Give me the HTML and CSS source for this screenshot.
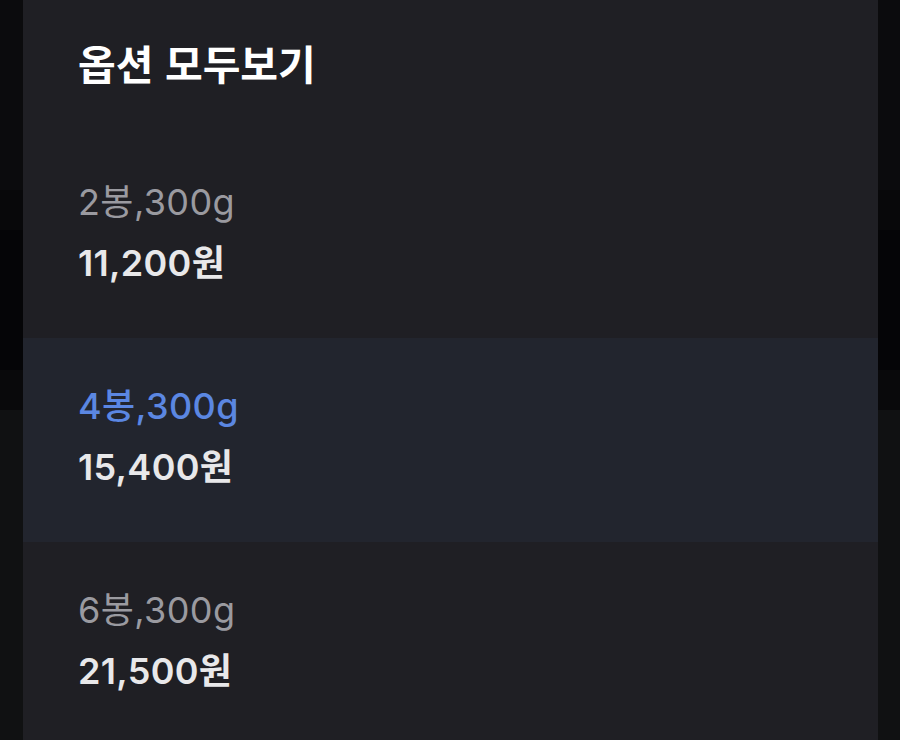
FILE: index.html
```html
<!DOCTYPE html>
<html lang="ko">
<head>
<meta charset="utf-8">
<title>옵션 모두보기</title>
<link rel="stylesheet" href="styles.css">
</head>
<body>
<div class="sheet">
  <h1 class="sheet-title">옵션 모두보기</h1>
  <ul class="options">
    <li class="option">
      <div class="option-name">2봉,300g</div>
      <div class="option-price">11,200원</div>
    </li>
    <li class="option is-selected">
      <div class="option-name">4봉,300g</div>
      <div class="option-price">15,400원</div>
    </li>
    <li class="option">
      <div class="option-name">6봉,300g</div>
      <div class="option-price">21,500원</div>
    </li>
  </ul>
</div>
</body>
</html>
```

FILE: styles.css
```css
html, body {
  margin: 0;
  padding: 0;
}

body {
  width: 900px;
  height: 740px;
  overflow: hidden;
  font-family: "Inter", "Noto Sans CJK KR", sans-serif;
  background: linear-gradient(to bottom,
    #0b0b0d 0, #0b0b0d 190px,
    #08080a 190px, #08080a 230px,
    #050507 230px, #050507 370px,
    #09090b 370px, #09090b 410px,
    #101112 410px, #101112 740px);
}

.sheet {
  margin: 0 22px 0 23px;
  height: 740px;
  background: #1f1f24;
  overflow: hidden;
}

.sheet-title {
  margin: 0;
  padding: 37px 55px 0;
  height: 97px;
  box-sizing: border-box;
  font-family: "Noto Sans CJK KR", sans-serif;
  font-size: 41px;
  line-height: 50px;
  font-weight: 700;
  color: #ffffff;
}

.options {
  list-style: none;
  margin: 0;
  padding: 0;
}

.sheet-title + .options {
  margin-top: 37px;
}

.option {
  height: 204px;
  box-sizing: border-box;
  padding: 45px 55px 0;
}

.option.is-selected {
  background: #22252e;
}

.option-name {
  font-size: 36px;
  line-height: 46px;
  color: #9a9aa0;
  font-weight: 400;
  letter-spacing: 0.4px;
}

.option.is-selected .option-name {
  color: #5b87e2;
  font-weight: 500;
}

.option-price {
  margin-top: 15px;
  font-size: 36px;
  line-height: 46px;
  font-weight: 600;
  color: #e8e8ea;
  letter-spacing: 0.3px;
}
```
